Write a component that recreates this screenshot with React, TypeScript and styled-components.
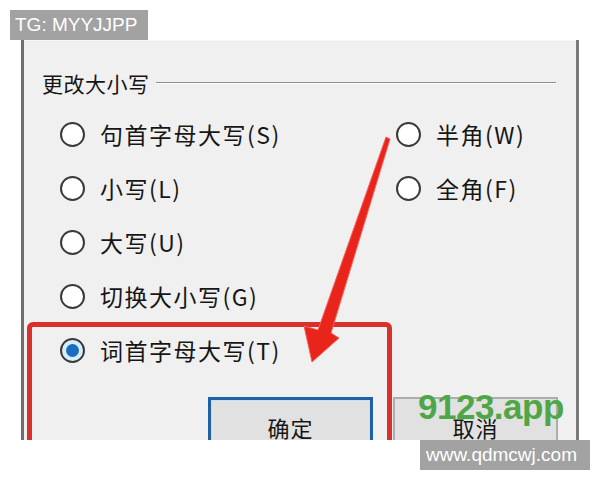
import React from "react";
import styled, { createGlobalStyle } from "styled-components";

const Global = createGlobalStyle`
  html, body { margin: 0; padding: 0; background: #ffffff; }
  * { box-sizing: border-box; }
`;

const Page = styled.div`
  position: relative;
  width: 600px;
  height: 480px;
  overflow: hidden;
  background: #ffffff;
  padding: 40px 0 0 21px;
  font-family: "Noto Sans CJK SC", "Noto Sans", sans-serif;
`;

const Frame = styled.div`
  position: relative;
  width: 558px;
  height: 400px;
  overflow: hidden;
  background: #f0f0f0;
  border-left: 3px solid #6e6e6e;
  border-right: 3px solid #7a7a7a;
  display: flex;
  flex-direction: column;
`;

const TopStrip = styled.div`
  height: 10px;
  background: #fbfbfb;
  border-bottom: 1px solid #f6f6f6;
`;

const GroupHeader = styled.div`
  display: flex;
  align-items: center;
  gap: 6px;
  margin: 28px 20px 0 18px;
  height: 28px;
  font-size: 21px;
  letter-spacing: 0.5px;
  color: #141414;
  &::after {
    content: "";
    flex: 1;
    height: 1px;
    background: #8c8c8c;
    box-shadow: 0 1px 0 #ffffff;
    margin-top: -2px;
  }
`;

const Options = styled.div`
  display: grid;
  grid-template-columns: 336px 1fr;
  margin: 10px 0 0 36px;
`;

const Column = styled.div`
  display: flex;
  flex-direction: column;
`;

const Row = styled.div`
  display: flex;
  align-items: center;
  height: 54px;
  gap: 15px;
  font-size: 23px;
  letter-spacing: 1.5px;
  color: #161616;
`;

const Radio = styled.span<{ $checked?: boolean }>`
  width: 25px;
  height: 25px;
  border-radius: 50%;
  border: 2px solid #3a3a3a;
  background: #ffffff;
  display: flex;
  align-items: center;
  justify-content: center;
  flex: none;
  ${(p) =>
    p.$checked &&
    `
    background: #d6effa;
    &::after {
      content: "";
      width: 13px;
      height: 13px;
      border-radius: 50%;
      background: #1c6cc1;
    }
  `}
`;

const Buttons = styled.div`
  display: flex;
  gap: 20px;
  margin: 20px 0 0 184px;
`;

const Button = styled.div<{ $primary?: boolean }>`
  width: 165px;
  height: 60px;
  flex: none;
  display: flex;
  align-items: center;
  justify-content: center;
  font-size: 22px;
  letter-spacing: 1px;
  color: #161616;
  background: #e1e1e1;
  border: ${(p) => (p.$primary ? "3px solid #1f5fa3" : "2px solid #adadad")};
  box-shadow: ${(p) => (p.$primary ? "inset 0 0 0 1px #bfe4f7" : "none")};
`;

const Highlight = styled.div`
  position: absolute;
  left: 3px;
  top: 282px;
  width: 365px;
  height: 200px;
  border: 5px solid #d8302a;
  border-radius: 6px;
  pointer-events: none;
`;

const Tag = styled.div`
  position: absolute;
  background: #a2a2a2;
  color: #ffffff;
  font-family: "Liberation Sans", Arial, sans-serif;
  display: flex;
  align-items: center;
`;

const TopTag = styled(Tag)`
  left: 10px;
  top: 10px;
  width: 138px;
  height: 30px;
  padding-left: 5px;
  font-size: 19px;
`;

const BottomTag = styled(Tag)`
  left: 420px;
  top: 440px;
  width: 170px;
  height: 30px;
  padding-left: 6px;
  font-size: 19px;
`;

const Brand = styled.div`
  position: absolute;
  left: 418px;
  top: 387px;
  font-family: "Liberation Sans", Arial, sans-serif;
  font-weight: 700;
  font-size: 35px;
  color: #4fa647;
  letter-spacing: -0.5px;
`;

const Arrow = styled.svg`
  position: absolute;
  left: 0;
  top: 0;
  pointer-events: none;
`;

const leftOptions = [
  { label: "句首字母大写(S)" },
  { label: "小写(L)" },
  { label: "大写(U)" },
  { label: "切换大小写(G)" },
  { label: "词首字母大写(T)", checked: true },
];

const rightOptions = [{ label: "半角(W)" }, { label: "全角(F)" }];

export default function App() {
  return (
    <>
      <Global />
      <Page>
        <Frame>
          <TopStrip />
          <GroupHeader>更改大小写</GroupHeader>
          <Options>
            <Column>
              {leftOptions.map((o) => (
                <Row key={o.label}>
                  <Radio $checked={o.checked} />
                  <span>{o.label}</span>
                </Row>
              ))}
            </Column>
            <Column>
              {rightOptions.map((o) => (
                <Row key={o.label}>
                  <Radio />
                  <span>{o.label}</span>
                </Row>
              ))}
            </Column>
          </Options>
          <Buttons>
            <Button $primary>确定</Button>
            <Button>取消</Button>
          </Buttons>
          <Highlight />
        </Frame>
        <Arrow width="600" height="480" viewBox="0 0 600 480">
          <polygon
            points="386,137 318,330 304,326 312,362 339,338 331,333 390,139"
            fill="#e8241b"
            stroke="#f4605a"
            strokeWidth="1"
            strokeLinejoin="round"
          />
        </Arrow>
        <Brand>9123.app</Brand>
        <TopTag>TG: MYYJJPP</TopTag>
        <BottomTag>www.qdmcwj.com</BottomTag>
      </Page>
    </>
  );
}
